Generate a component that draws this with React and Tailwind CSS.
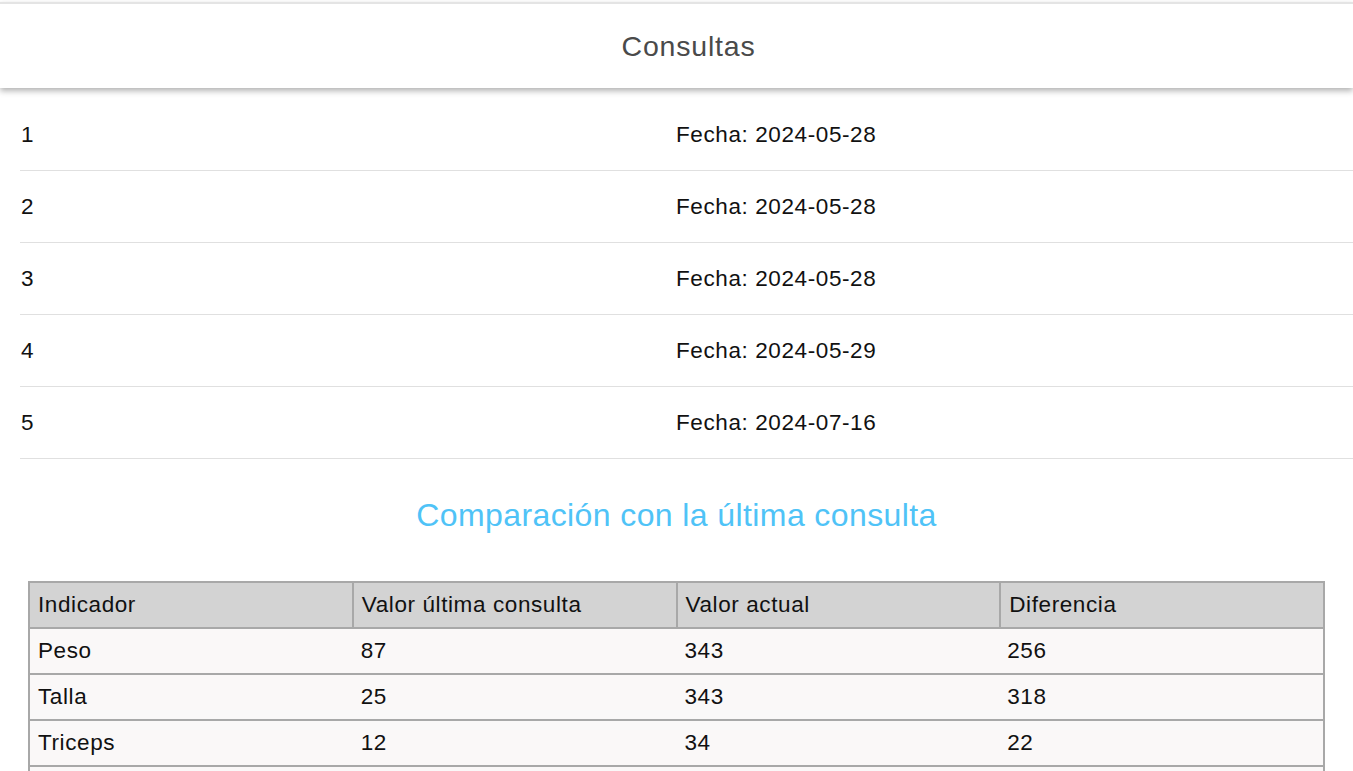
import React from 'react';

const consultas = [
  { id: 1, fecha: '2024-05-28' },
  { id: 2, fecha: '2024-05-28' },
  { id: 3, fecha: '2024-05-28' },
  { id: 4, fecha: '2024-05-29' },
  { id: 5, fecha: '2024-07-16' },
];

const comparacion = [
  { indicador: 'Peso', anterior: 87, actual: 343, diferencia: 256 },
  { indicador: 'Talla', anterior: 25, actual: 343, diferencia: 318 },
  { indicador: 'Triceps', anterior: 12, actual: 34, diferencia: 22 },
  { indicador: 'Biceps', anterior: 10, actual: 21, diferencia: 11 },
];

const headers = ['Indicador', 'Valor última consulta', 'Valor actual', 'Diferencia'];

export default function App() {
  return (
    <div className="min-h-screen bg-white pt-[2px] text-black font-['Liberation_Sans',Arial,sans-serif]">
      {/* barra superior */}
      <header className="h-[86px] pl-6 border-t-2 border-[#e4e4e4] bg-white shadow-[0_3px_6px_rgba(0,0,0,0.3)] flex items-center justify-center">
        <h1 className="text-[28.5px] tracking-[0.8px] text-[#4a4a4a]">Consultas</h1>
      </header>

      {/* lista de consultas */}
      <ul className="ml-5 mt-[11px]">
        {consultas.map((c) => (
          <li
            key={c.id}
            className="grid grid-cols-[656px_1fr] h-[72px] items-center border-b border-[#e0e0e0] text-[22.5px] tracking-[0.6px] text-[#111]"
          >
            <span className="pl-px">{c.id}</span>
            <span>Fecha: {c.fecha}</span>
          </li>
        ))}
      </ul>

      <h2 className="mt-[38px] text-center text-[32px] leading-[36px] tracking-[0.4px] text-[#4fc3f7]">
        Comparación con la última consulta
      </h2>

      <div className="mx-[28px] mt-[48px] mb-10">
        <table className="w-full table-fixed border-collapse text-[22.5px] tracking-[0.6px] text-[#111]">
          <thead>
            <tr className="bg-[#d3d3d3]">
              {headers.map((h) => (
                <th key={h} className="h-[46px] border-2 border-[#a8a8a8] px-[8px] text-left font-normal">
                  {h}
                </th>
              ))}
            </tr>
          </thead>
          <tbody>
            {comparacion.map((row) => (
              <tr key={row.indicador} className="bg-[#faf8f8] border-2 border-[#a8a8a8]">
                <td className="h-[46px] px-[8px]">{row.indicador}</td>
                <td className="h-[46px] px-[8px]">{row.anterior}</td>
                <td className="h-[46px] px-[8px]">{row.actual}</td>
                <td className="h-[46px] px-[7px]">{row.diferencia}</td>
              </tr>
            ))}
          </tbody>
        </table>
      </div>
    </div>
  );
}
